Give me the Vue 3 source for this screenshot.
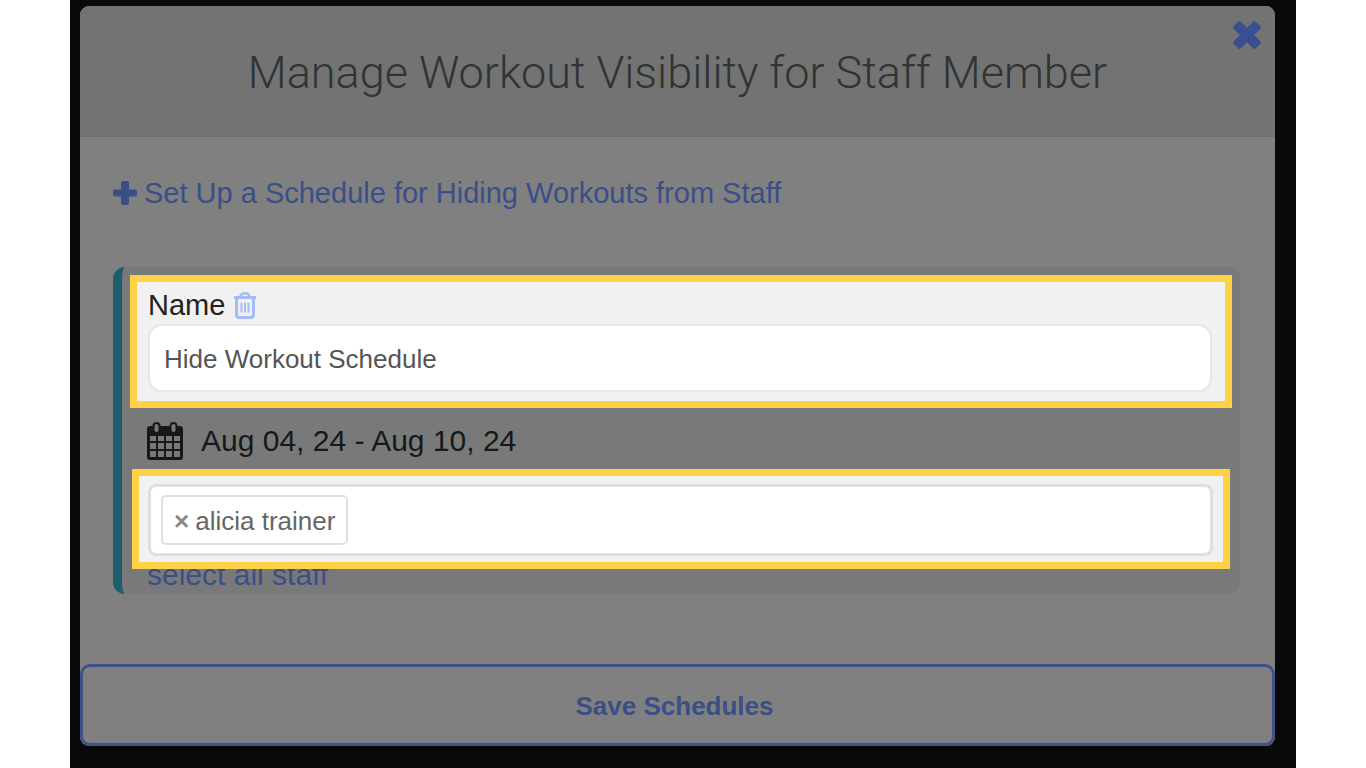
<script setup>
import { ref } from 'vue'

const scheduleName = ref('Hide Workout Schedule')
const staff = ref(['alicia trainer'])
const removeStaff = (i) => staff.value.splice(i, 1)
</script>

<template>
  <main class="stage">
    <section class="modal" role="dialog" aria-labelledby="dialog-title">
      <header class="modal-header">
        <h1 id="dialog-title">Manage Workout Visibility for Staff Member</h1>
        <button class="close" type="button" aria-label="Close">
          <svg viewBox="0 0 30 30" width="30" height="30">
            <path d="M9 1.800Q7.500 .3 6 1.800L1.800 6Q.3 7.500 1.800 9L7.800 15 1.800 21Q.3 22.500 1.800 24L6 28.200Q7.500 29.700 9 28.200L15 22.200 21 28.200Q22.500 29.700 24 28.200L28.200 24Q29.700 22.500 28.200 21L22.200 15 28.200 9Q29.700 7.500 28.200 6L24 1.800Q22.500 .3 21 1.800L15 7.800z" fill="currentColor" />
          </svg>
        </button>
      </header>

      <div class="modal-body">
        <a class="add" href="#">
          <svg viewBox="0 0 24 24" width="24" height="24">
            <path d="M10 0h4q2 0 2 2v6.500h6q2 0 2 2v3q0 2-2 2h-6V22q0 2-2 2h-4q-2 0-2-2v-6.500H2q-2 0-2-2v-3q0-2 2-2h6V2q0-2 2-2z" fill="currentColor" />
          </svg>
          <span>Set Up a Schedule for Hiding Workouts from Staff</span>
        </a>

        <article class="card">
          <div class="highlight name-field">
            <div class="label-row">
              <label for="schedule-name">Name</label>
              <button class="trash" type="button" aria-label="Delete schedule">
                <svg viewBox="0 0 24 28" width="24" height="28" fill="none" stroke="currentColor">
                  <path d="M1 5.500h22" stroke-width="3" />
                  <path d="M7 5 8.500 2.500Q9 1.500 10 1.500h4q1 0 1.500 1L17 5" stroke-width="2.500" />
                  <path d="M3.500 6v16.500q0 3 3 3h11q3 0 3-3V6" stroke-width="3" />
                  <path d="M8.500 10.500v10M12 10.500v10M15.500 10.500v10" stroke-width="2" />
                </svg>
              </button>
            </div>
            <input id="schedule-name" v-model="scheduleName" type="text" />
          </div>

          <div class="dates">
            <svg viewBox="0 0 36 38" width="36" height="38">
              <path fill="currentColor" fill-rule="evenodd" d="M3 4h30q3 0 3 3v28q0 3-3 3H3q-3 0-3-3V7q0-3 3-3zM3 14v5h6v-5zM11 14v5h6v-5zM19 14v5h6v-5zM27 14v5h6v-5zM3 21v6h6v-6zM11 21v6h6v-6zM19 21v6h6v-6zM27 21v6h6v-6zM3 29v6h6v-6zM11 29v6h6v-6zM19 29v6h6v-6zM27 29v6h6v-6z" />
              <rect x="6.500" y="1" width="6" height="10" rx="3" fill="#797979" stroke="currentColor" stroke-width="2" />
              <rect x="23.500" y="1" width="6" height="10" rx="3" fill="#797979" stroke="currentColor" stroke-width="2" />
            </svg>
            <span>Aug 04, 24 - Aug 10, 24</span>
          </div>

          <div class="highlight staff-field">
            <ul class="tags" aria-label="Staff">
              <li v-for="(person, i) in staff" :key="person" class="tag">
                <button type="button" :aria-label="'Remove ' + person" @click="removeStaff(i)">×</button>
                <span>{{ person }}</span>
              </li>
            </ul>
          </div>

          <a class="select-all" href="#">select all staff</a>
        </article>
      </div>

      <button class="save" type="button">Save Schedules</button>
    </section>
  </main>
</template>

<style>
body {
  margin: 0;
  background: #fff;
}
</style>

<style scoped>
* {
  box-sizing: border-box;
}

.stage {
  min-height: 100vh;
  margin: 0 70px;
  padding: 6px 21px 22px 10px;
  background: #090909;
  font-family: "Liberation Sans", Arial, sans-serif;
}

button {
  padding: 0;
  border: 0;
  background: none;
  font: inherit;
  color: inherit;
  cursor: pointer;
}

a {
  text-decoration: none;
}

svg {
  display: block;
}

.modal {
  border-radius: 9px;
  background: #808080;
}

.modal-header {
  position: relative;
  padding: 37px 16px 33px;
  border-bottom: 1px solid #6e6e6e;
  border-radius: 9px 9px 0 0;
  background: #737373;
}

h1 {
  margin: 0;
  color: #303435;
  font-family: Roboto, "Liberation Sans", sans-serif;
  font-size: 45px;
  font-weight: 300;
  line-height: 60px;
  text-align: center;
}

.close {
  position: absolute;
  top: 14px;
  right: 13px;
  color: #3a4f8f;
}

.modal-body {
  padding: 36px 35px 70px 33px;
}

.add {
  display: flex;
  align-items: center;
  gap: 7px;
  color: #3b4f87;
  font-size: 29px;
  line-height: 40px;
}

.card {
  margin-top: 54px;
  padding: 8px 0 4px 8px;
  border-left: 9px solid #1b5f6a;
  border-radius: 12px;
  background: #797979;
}

.highlight {
  position: relative;
  border: 7px solid #ffd146;
  background: #f1f1f1;
}

.name-field {
  margin-right: 8px;
  padding: 5px 13px 9px 11px;
}

.label-row {
  display: flex;
  align-items: center;
  gap: 8px;
  height: 37px;
  color: #222;
  font-size: 29px;
}

.trash {
  color: #a5bbf6;
}

input {
  display: block;
  width: 100%;
  height: 68px;
  padding: 2px 14px 0;
  border: 2px solid #e7e7e7;
  border-radius: 14px;
  background: #fff;
  color: #555;
  font-family: inherit;
  font-size: 26px;
}

.dates {
  display: flex;
  align-items: center;
  gap: 18px;
  height: 61px;
  padding: 5px 0 0 17px;
  color: #151919;
  font-size: 30px;
}

.staff-field {
  margin: 0 10px 0 2px;
  padding: 8px 10px 6px 9px;
}

.tags {
  display: flex;
  margin: 0;
  padding: 8px 10px;
  border: 3px solid #dfdfdf;
  border-radius: 8px;
  background: #fff;
  list-style: none;
}

.tag {
  display: flex;
  align-items: center;
  gap: 6px;
  height: 50px;
  padding: 2px 11px 0;
  border: 2px solid #e0e0e0;
  border-radius: 5px;
  color: #666;
  font-size: 26px;
}

.tag button {
  color: #888;
  font-weight: 700;
}

.select-all {
  display: block;
  margin: -9px 0 0 17px;
  color: #3b4f87;
  font-size: 30px;
  line-height: 30px;
}

.save {
  display: block;
  width: 100%;
  height: 82px;
  padding: 2px 6px 0 0;
  border: 3px solid #40528c;
  border-radius: 10px;
  color: #3b4f87;
  font-size: 26px;
  font-weight: 700;
}
</style>
